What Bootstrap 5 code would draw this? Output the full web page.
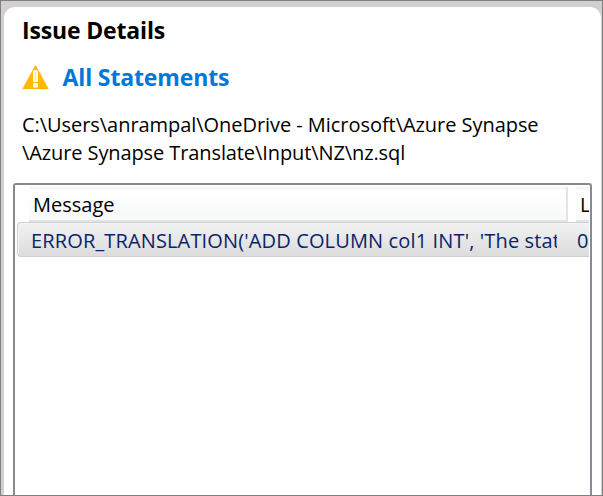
<!DOCTYPE html>
<html lang="en">
<head>
<meta charset="utf-8">
<meta name="viewport" content="width=device-width, initial-scale=1">
<title>Issue Details</title>
<link href="https://cdn.jsdelivr.net/npm/bootstrap@5.3.0/dist/css/bootstrap.min.css" rel="stylesheet">
<style>
body{font-family:"Segoe UI","Open Sans","Noto Sans",sans-serif;font-size:20px;color:#000}
.window-frame{background:#d1cfd0;border:1px solid #7f7f7f;padding:6px 1px 0 3px}
.pane{border-radius:11px 11px 0 0;padding:0 9px}
.pane-title{font-size:23px;line-height:32px;padding:7px 0 0 9px;letter-spacing:-.16px}
.group-title{font-size:23px;line-height:32px;color:#0078d7;letter-spacing:-.13px}
.group-line{padding:15px 0 0 9px;gap:13.5px}
.file-path{line-height:28px;padding:18px 0 0 9px}
.path-a{letter-spacing:-.05px}
.path-b{letter-spacing:-.1px}
.issue-list{border:2px solid #858a94;border-bottom:0;border-radius:3px 3px 0 0;margin-top:16px;padding:2px 1px 0 2px}
.head-line{height:35px;padding-left:12px}
.head-cell{background:linear-gradient(#f3f3f3 0,#fff 4px,#f7f8f8 100%);border-bottom:2px solid #e3e4e5;line-height:36px;padding-left:4px}
.head-message{width:539px;border-right:2px solid #e3e4e5}
.head-next{margin-left:8px;padding-left:4px}
.issue-row{height:35px;border:1px solid #cfcfcf;border-right:0;border-radius:4px 0 0 4px;background:linear-gradient(#f2f2f2,#dcdcdc);box-shadow:inset 1px 1px #f6f6f6;color:#0a246a;line-height:35px;padding-left:13px}
.cell-message{width:526px;letter-spacing:.14px}
.cell-next{margin-left:20px}
</style>
<script src="https://cdn.jsdelivr.net/npm/bootstrap@5.3.0/dist/js/bootstrap.bundle.min.js"></script>
</head>
<body class="m-0 overflow-hidden">
<div class="window-frame vh-100 d-flex flex-column">
  <main class="pane bg-white flex-grow-1 d-flex flex-column">
    <h1 class="pane-title fw-bold m-0">Issue Details</h1>
    <div class="group-line d-flex align-items-center">
      <svg width="27" height="26" viewBox="0 0 27 26" aria-hidden="true"><path d="M13.5.8 26.7 25H.3Z" fill="#ffb900"/><rect x="11" y="6" width="5" height="12" rx="1.5" fill="#fff"/><rect x="11" y="19" width="5" height="4.5" rx="1" fill="#fff"/><path d="M12.6 7.5h1.8v9h-1.8zM12.6 20.3h1.8v1.8h-1.8z" fill="#ffe9a8"/></svg>
      <h2 class="group-title fw-bold m-0">All Statements</h2>
    </div>
    <p class="file-path m-0 text-nowrap"><span class="path-a">C:\Users\anrampal\OneDrive - Microsoft\Azure Synapse</span><br><span class="path-b">\Azure Synapse Translate\Input\NZ\nz.sql</span></p>
    <section class="issue-list flex-grow-1 overflow-hidden">
      <div class="head-line d-flex">
        <div class="head-cell head-message flex-shrink-0">Message</div>
        <div class="head-cell head-next flex-grow-1 overflow-hidden">L</div>
      </div>
      <div class="issue-row d-flex overflow-hidden">
        <div class="cell-message flex-shrink-0 overflow-hidden text-nowrap">ERROR_TRANSLATION('ADD COLUMN col1 INT', 'The stat</div>
        <div class="cell-next">0</div>
      </div>
    </section>
  </main>
</div>
</body>
</html>
